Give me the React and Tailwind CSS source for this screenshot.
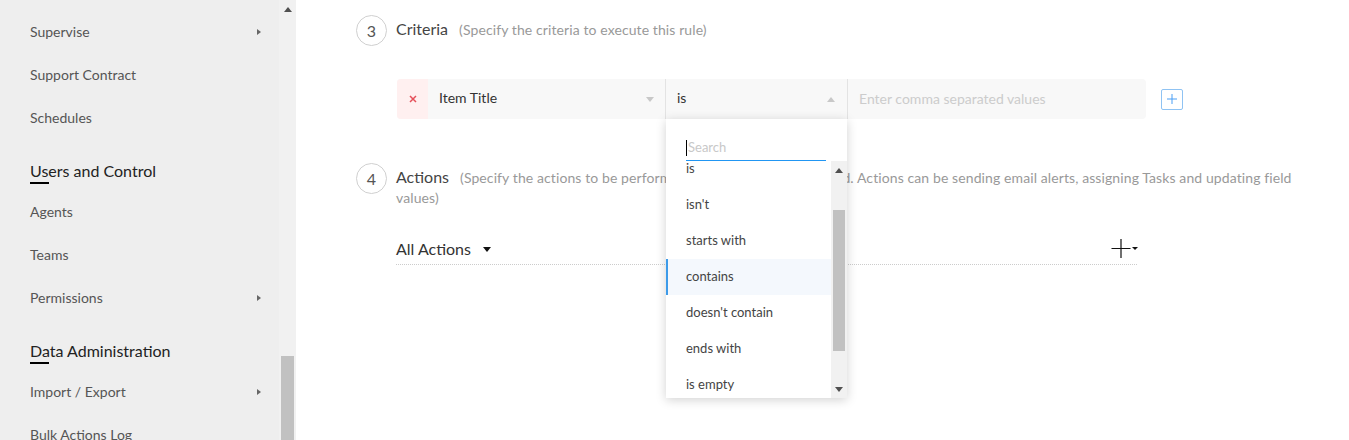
function NavItem({ label, arrow }) {
  return (
    <div className="h-[43px] flex items-center justify-between pl-[30px] pr-[18px] text-[14px] text-[#555]">
      <span>{label}</span>
      {arrow && (
        <span className="w-0 h-0 border-y-[3.5px] border-y-transparent border-l-[4px] border-l-[#666]" />
      )}
    </div>
  );
}

function NavHeader({ label }) {
  return (
    <div className="pt-[22px] pb-[6px] pl-[30px]">
      <div className="text-[16px] leading-[20px] text-[#222]">{label}</div>
      <div className="mt-[1px] h-[2px] w-[19px] bg-black" />
    </div>
  );
}

function Caret({ up, color = "#c8c8c8" }) {
  return (
    <svg width="8" height="5" viewBox="0 0 8 5">
      {up ? <polygon points="0,5 8,5 4,0" fill={color} /> : <polygon points="0,0 8,0 4,5" fill={color} />}
    </svg>
  );
}

const items = ["is", "isn't", "starts with", "contains", "doesn't contain", "ends with", "is empty"];

export default function App() {
  return (
    <div className="h-[440px] w-[1349px] overflow-hidden flex font-[Lato,sans-serif] bg-white">
      {/* Sidebar */}
      <div className="w-[279px] h-full bg-[#eeeeee] pt-[10px] shrink-0">
        <NavItem label="Supervise" arrow />
        <NavItem label="Support Contract" />
        <NavItem label="Schedules" />
        <NavHeader label="Users and Control" />
        <NavItem label="Agents" />
        <NavItem label="Teams" />
        <NavItem label="Permissions" arrow />
        <NavHeader label="Data Administration" />
        <NavItem label="Import / Export" arrow />
        <NavItem label="Bulk Actions Log" />
      </div>
      {/* Sidebar scrollbar */}
      <div className="w-[17px] h-full bg-[#f1f1f1] flex flex-col shrink-0">
        <div className="h-[17px] flex items-start justify-center pt-[7px]">
          <svg width="8" height="5" viewBox="0 0 8 5">
            <polygon points="0,5 8,5 4,0" fill="#505050" />
          </svg>
        </div>
        <div className="h-[339px]" />
        <div className="flex-1 mx-[2px] bg-[#c1c1c1]" />
      </div>

      {/* Main */}
      <div className="flex-1 h-full pl-[60px] pt-[15px]">
        {/* Step 3 */}
        <div className="flex items-center h-[31px]">
          <div className="w-[31px] h-[31px] rounded-full border border-[#d0d0d0] flex items-center justify-center text-[16px] text-[#555] shrink-0">
            3
          </div>
          <div className="ml-[9px] -mt-[4px] text-[16px] text-[#444] leading-[21px]">
            Criteria
            <span className="ml-[11px] text-[14px] tracking-[0.1px] text-[#999]">(Specify the criteria to execute this rule)</span>
          </div>
        </div>

        {/* Criteria row */}
        <div className="mt-[33px] ml-[41px] flex items-center">
          <div className="flex h-[40px] w-[749px] rounded-[4px] bg-[#f8f8f8]">
            <div className="w-[31px] bg-[#fff0f0] rounded-l-[4px] flex items-center justify-center">
              <svg width="8" height="8" viewBox="0 0 8 8">
                <path d="M1 1 L7 7 M7 1 L1 7" stroke="#e5505a" strokeWidth="1.5" />
              </svg>
            </div>
            <div className="w-[238px] border-r border-[#e3e3e3] flex items-center justify-between pl-[11px] pr-[11px] text-[14px] text-[#333]">
              <span className="-mt-[3px]">Item Title</span>
              <Caret />
            </div>
            <div className="relative w-[182px] border-r border-[#e3e3e3] flex items-center justify-between pl-[11px] pr-[12px] text-[14px] text-[#333]">
              <span className="-mt-[3px]">is</span>
              <Caret up />
              {/* Dropdown */}
              <div className="absolute left-0 top-[40px] w-[181px] h-[279px] bg-white shadow-[0_2px_10px_rgba(0,0,0,0.18)] z-10 flex flex-col">
                <div className="pt-[16px] pl-[20px] pr-[21px]">
                  <div className="h-[26px] border-b border-[#2196f3] flex items-center text-[13px] text-[#c8c8c8]">
                    <span className="w-[1px] h-[16px] bg-black mr-[1px]" />
                    Search
                  </div>
                </div>
                <div className="flex-1 flex overflow-hidden">
                  <div className="flex-1 overflow-hidden">
                    <div className="-mt-[10px]">
                      {items.map((it) =>
                        it === "contains" ? (
                          <div key={it} className="h-[36px] flex items-center pl-[18px] border-l-2 border-[#3d9be9] bg-[#f4f8fd] text-[13px] text-[#444]">
                            <span className="-mt-[1px]">{it}</span>
                          </div>
                        ) : (
                          <div key={it} className="h-[36px] flex items-center pl-[20px] text-[13px] text-[#444]">
                            {it}
                          </div>
                        )
                      )}
                    </div>
                  </div>
                  <div className="w-[16px] bg-[#f1f1f1] flex flex-col items-center">
                    <div className="h-[16px] flex items-center justify-center pt-[2px]">
                      <svg width="8" height="5" viewBox="0 0 8 5">
                        <polygon points="0,5 8,5 4,0" fill="#505050" />
                      </svg>
                    </div>
                    <div className="h-[33px]" />
                    <div className="w-[12px] h-[141px] bg-[#c1c1c1]" />
                    <div className="flex-1 flex items-end pb-[6px]">
                      <svg width="8" height="5" viewBox="0 0 8 5">
                        <polygon points="0,0 8,0 4,5" fill="#505050" />
                      </svg>
                    </div>
                  </div>
                </div>
              </div>
            </div>
            <div className="flex-1 flex items-center pl-[11px] text-[14px] text-[#cccccc] rounded-r-[4px]">
              <span className="-mt-[1px]">Enter comma separated values</span>
            </div>
          </div>
          <div className="ml-[15px] w-[22px] h-[21px] border border-[#8fc3f3] rounded-[2px] flex items-center justify-center">
            <svg width="12" height="12" viewBox="0 0 12 12">
              <path d="M6 1 V11 M1 6 H11" stroke="#4a9ff5" strokeWidth="1" />
            </svg>
          </div>
        </div>

        {/* Step 4 */}
        <div className="mt-[44px] flex items-start h-[45px]">
          <div className="w-[31px] h-[31px] rounded-full border border-[#d0d0d0] flex items-center justify-center text-[16px] text-[#555] shrink-0">
            4
          </div>
          <div className="ml-[9px] mt-[4px] w-[920px] text-[16px] text-[#444] leading-[19px]">
            Actions
            <span className="ml-[11px] text-[14px] tracking-[0.1px] text-[#999]">
              (Specify the actions to be performed when the rule is executed. Actions can be sending email alerts, assigning Tasks and updating field values)
            </span>
          </div>
        </div>

        {/* All Actions */}
        <div className="mt-[31px] ml-[40px] w-[741px] pb-[5px] border-b border-dotted border-[#cccccc] flex items-center justify-between">
          <div className="flex items-center text-[16px] leading-[20px] text-[#333]">
            All Actions
            <span className="ml-[12px] flex">
              <Caret color="#111" />
            </span>
          </div>
          <svg width="28" height="20" viewBox="0 0 28 20" className="-mr-[2px]">
            <path d="M0.5 9.5 H19.5 M10 0 V19" stroke="#111" strokeWidth="1.2" />
            <polygon points="21,8 27,8 24,11" fill="#111" />
          </svg>
        </div>
      </div>
    </div>
  );
}
